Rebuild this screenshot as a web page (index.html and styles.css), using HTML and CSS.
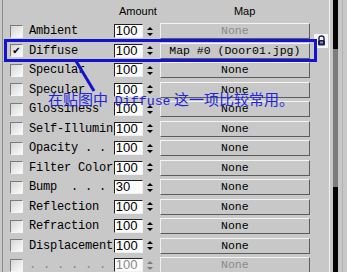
FILE: index.html
```html
<!DOCTYPE html>
<html lang="zh-CN">
<head>
    <meta charset="UTF-8">
    <title>Maps</title>
    <link rel="stylesheet" href="styles.css">
</head>
<body>
    <div class="panel">
        <div class="rollout">
            <div class="head">
                <span class="h-amount">Amount</span>
                <span class="h-map">Map</span>
            </div>

            <div class="row">
                <span class="cb"></span>
                <span class="label">Ambient</span>
                <span class="spin">100</span>
                <span class="arrows"><i class="up"></i><i class="down"></i></span>
                <span class="mapbtn off">None</span>
                <span class="slot"><span class="lock"><svg width="9" height="11" viewBox="0 0 9 11"><path d="M2 5 V3 Q2 1 4.5 1 Q7 1 7 3 V5" fill="none" stroke="#1c1c5a" stroke-width="1.4"/><rect x="1" y="5" width="7" height="5.5" rx="1" fill="#1c1c5a"/><rect x="3" y="6.5" width="3" height="2" fill="#8a8ab0"/></svg></span></span>
            </div>
            <div class="row">
                <span class="cb on">&#10004;</span>
                <span class="label">Diffuse</span>
                <span class="spin">100</span>
                <span class="arrows"><i class="up"></i><i class="down"></i></span>
                <span class="mapbtn">Map #0 (Door01.jpg)</span>
                <span class="slot"></span>
            </div>
            <div class="row">
                <span class="cb"></span>
                <span class="label">Specular</span>
                <span class="spin">100</span>
                <span class="arrows"><i class="up"></i><i class="down"></i></span>
                <span class="mapbtn">None</span>
                <span class="slot"></span>
            </div>
            <div class="row">
                <span class="cb"></span>
                <span class="label">Specular</span>
                <span class="spin">100</span>
                <span class="arrows"><i class="up"></i><i class="down"></i></span>
                <span class="mapbtn">None</span>
                <span class="slot"></span>
            </div>
            <div class="row">
                <span class="cb"></span>
                <span class="label">Glossiness</span>
                <span class="spin">100</span>
                <span class="arrows"><i class="up"></i><i class="down"></i></span>
                <span class="mapbtn">None</span>
                <span class="slot"></span>
            </div>
            <div class="row">
                <span class="cb"></span>
                <span class="label">Self-Illumin</span>
                <span class="spin">100</span>
                <span class="arrows"><i class="up"></i><i class="down"></i></span>
                <span class="mapbtn">None</span>
                <span class="slot"></span>
            </div>
            <div class="row">
                <span class="cb"></span>
                <span class="label">Opacity . .</span>
                <span class="spin">100</span>
                <span class="arrows"><i class="up"></i><i class="down"></i></span>
                <span class="mapbtn">None</span>
                <span class="slot"></span>
            </div>
            <div class="row">
                <span class="cb"></span>
                <span class="label">Filter Color</span>
                <span class="spin">100</span>
                <span class="arrows"><i class="up"></i><i class="down"></i></span>
                <span class="mapbtn">None</span>
                <span class="slot"></span>
            </div>
            <div class="row">
                <span class="cb"></span>
                <span class="label">Bump  . . .</span>
                <span class="spin">30</span>
                <span class="arrows"><i class="up"></i><i class="down"></i></span>
                <span class="mapbtn">None</span>
                <span class="slot"></span>
            </div>
            <div class="row">
                <span class="cb"></span>
                <span class="label">Reflection</span>
                <span class="spin">100</span>
                <span class="arrows"><i class="up"></i><i class="down"></i></span>
                <span class="mapbtn">None</span>
                <span class="slot"></span>
            </div>
            <div class="row">
                <span class="cb"></span>
                <span class="label">Refraction</span>
                <span class="spin">100</span>
                <span class="arrows"><i class="up"></i><i class="down"></i></span>
                <span class="mapbtn">None</span>
                <span class="slot"></span>
            </div>
            <div class="row">
                <span class="cb"></span>
                <span class="label">Displacement</span>
                <span class="spin">100</span>
                <span class="arrows"><i class="up"></i><i class="down"></i></span>
                <span class="mapbtn">None</span>
                <span class="slot"></span>
            </div>
            <div class="row dim">
                <span class="cb"></span>
                <span class="label">. . . . . .</span>
                <span class="spin">100</span>
                <span class="arrows"><i class="up"></i><i class="down"></i></span>
                <span class="mapbtn off">None</span>
                <span class="slot"></span>
            </div>
        </div>

        <div class="scroller">
            <div class="track">
                <div class="seg-top"></div>
                <div class="seg-thumb"></div>
                <div class="seg-bottom"></div>
            </div>
            <div class="edge"></div>
        </div>
    </div>

    <!-- annotation drawn over the panel -->
    <div class="callout"></div>
    <svg class="pointer" width="347" height="272">
        <line x1="76" y1="61" x2="94" y2="91" stroke="#1414d0" stroke-width="3"/>
    </svg>
    <div class="note">在贴图中  <span class="note-en">Diffuse</span> 这一项比较常用。</div>
</body>
</html>
```

FILE: styles.css
```css
body {
    margin: 0;
    width: 347px;
    height: 272px;
    overflow: hidden;
    position: relative;
    background-color: #c8c8c8;
    font-family: "Liberation Mono", monospace;
}

.panel {
    display: flex;
    height: 272px;
}

.rollout {
    width: 326px;
    margin-left: 2px;
    border-left: 1px solid #8e8e8e;
    border-right: 1px solid #f2f2f2;
}

.head {
    height: 21.5px;
    display: flex;
    align-items: center;
    font-family: "Liberation Sans", Arial, sans-serif;
    font-size: 11px;
    color: #000;
}

.h-amount {
    margin-left: 116px;
}

.h-map {
    margin-left: 77px;
}

.row {
    height: 19.5px;
    display: flex;
    align-items: center;
}

.cb {
    width: 11px;
    height: 11px;
    margin-left: 7px;
    border: 1px solid;
    border-color: #7c7c7c #f4f4f4 #f4f4f4 #7c7c7c;
    background: linear-gradient(135deg, #d6d6d6, #fbfbfb);
    font-family: "DejaVu Sans", sans-serif;
    font-size: 10px;
    font-weight: bold;
    line-height: 11px;
    text-align: center;
    color: #000;
}

.label {
    width: 84px;
    margin-left: 6px;
    font-size: 12px;
    letter-spacing: -0.2px;
    white-space: pre;
    color: #000;
}

.spin {
    width: 26px;
    height: 12px;
    margin-left: 1px;
    padding-left: 1px;
    border: 1px solid;
    border-color: #202020 #f0f0f0 #f0f0f0 #202020;
    background-color: #fbfbfb;
    font-family: "Liberation Sans", Arial, sans-serif;
    font-size: 13px;
    line-height: 12px;
    color: #000;
}

.arrows {
    width: 6px;
    margin-left: 4px;
    display: flex;
    flex-direction: column;
    gap: 3px;
}

.up {
    border-left: 3px solid transparent;
    border-right: 3px solid transparent;
    border-bottom: 3px solid #000;
}

.down {
    border-left: 3px solid transparent;
    border-right: 3px solid transparent;
    border-top: 3px solid #000;
}

.mapbtn {
    width: 149px;
    height: 14px;
    margin-left: 7px;
    border: 1px solid;
    border-color: #f4f4f4 #5c5c5c #5c5c5c #f0f0f0;
    font-size: 11.5px;
    line-height: 14px;
    text-align: center;
    white-space: pre;
    color: #000;
}

.mapbtn.off {
    color: #8a8a8a;
}

.slot {
    width: 15px;
    margin-left: 4px;
    align-self: flex-start;
    height: 1px;
}

.lock {
    display: flex;
    align-items: center;
    justify-content: center;
    width: 14px;
    height: 14px;
    margin-top: 12px;
    background-color: #f6f6f6;
}

.dim .label,
.dim .spin {
    color: #8a8a8a;
}

.dim .up {
    border-bottom-color: #7a7a7a;
}

.dim .down {
    border-top-color: #7a7a7a;
}

.scroller {
    flex: 1;
    display: flex;
}

.track {
    width: 5px;
    margin-left: 3px;
    display: flex;
    flex-direction: column;
}

.seg-top {
    height: 49px;
    background-color: #050505;
}

.seg-thumb {
    height: 138px;
    background-color: #7c7c7c;
}

.seg-bottom {
    flex: 1;
    background-color: #050505;
}

.edge {
    width: 1px;
    margin-left: 4px;
    background-color: #b4b4b4;
}

.callout {
    position: absolute;
    left: 4px;
    top: 39px;
    width: 313px;
    height: 23px;
    box-sizing: border-box;
    border: 3px solid #1414d0;
}

.pointer {
    position: absolute;
    left: 0;
    top: 0;
}

.note {
    position: absolute;
    left: 48px;
    top: 90px;
    font-family: "Noto Sans CJK SC", sans-serif;
    font-size: 15px;
    line-height: 17px;
    white-space: pre;
    color: #2424d8;
}

.note-en {
    font-family: "Liberation Mono", monospace;
    font-size: 13.3px;
}
```
